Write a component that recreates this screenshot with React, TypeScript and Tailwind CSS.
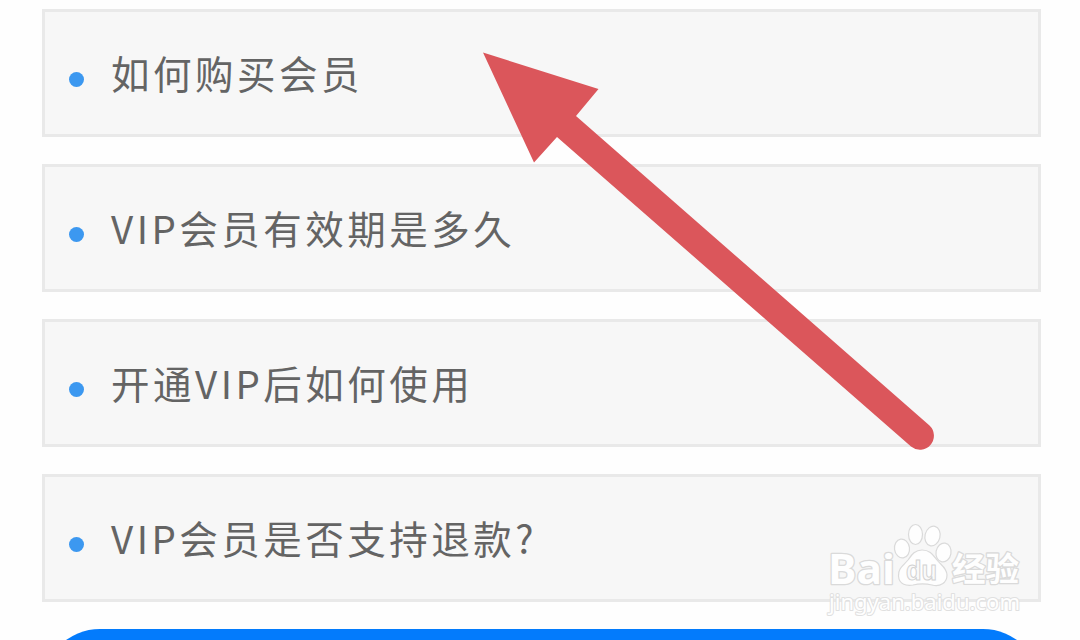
const questions = [
  "如何购买会员",
  "VIP会员有效期是多久",
  "开通VIP后如何使用",
  "VIP会员是否支持退款?",
];

function QuestionCard({ title }: { title: string }) {
  return (
    <li className="flex h-32 shrink-0 items-center border-3 border-[#e9e9e9] bg-[#f7f7f7] pl-6">
      <span className="mt-3 size-[15px] shrink-0 rounded-full bg-[#3c98f0]" />
      <span className="ml-[27px] pb-[3px] text-[38.5px] leading-[58px] tracking-[3.5px] whitespace-nowrap text-[#646464]">
        {title}
      </span>
    </li>
  );
}

function PointerArrow() {
  return (
    <svg
      className="pointer-events-none absolute top-0 left-0"
      width="1080"
      height="640"
      viewBox="0 0 1080 640"
      aria-hidden="true"
    >
      <path
        d="M483 52.500L598.500 89L576 116L929.500 425.500A14 14 0 0 1 911 446.500L557 137L534 162.500Z"
        fill="#db565b"
      />
    </svg>
  );
}

function Watermark() {
  return (
    <svg
      className="pointer-events-none absolute top-[510px] left-[820px]"
      width="240"
      height="120"
      viewBox="0 0 240 120"
      fill="#fefefe"
      stroke="#dadada"
      strokeWidth="1.2"
      aria-label="Baidu"
    >
      <g paintOrder="stroke" strokeLinejoin="round">
        <text
          x="8"
          y="73.500"
          fontSize="42"
          fontFamily="'Open Sans', sans-serif"
          fontWeight="700"
          strokeWidth="2.600"
          textLength="67"
          lengthAdjust="spacingAndGlyphs"
        >
          Bai
        </text>
        <text
          x="132"
          y="71"
          fontSize="33"
          fontFamily="'Noto Sans CJK SC', sans-serif"
          fontWeight="700"
          strokeWidth="2.600"
          textLength="67"
          lengthAdjust="spacingAndGlyphs"
        >
          经验
        </text>
        <text
          x="9"
          y="100"
          fontSize="22"
          fontFamily="'Noto Sans', sans-serif"
          fontWeight="400"
          stroke="#e0e0e0"
          strokeWidth="2"
          textLength="191"
          lengthAdjust="spacingAndGlyphs"
        >
          jingyan.baidu.com
        </text>
      </g>
      <ellipse cx="82" cy="38.500" rx="7.500" ry="9.500" transform="rotate(-8 82 38.500)" />
      <ellipse cx="95.500" cy="24.500" rx="7" ry="10" />
      <ellipse cx="112.500" cy="26" rx="7.500" ry="10" transform="rotate(14 112.500 26)" />
      <ellipse cx="123.500" cy="42.500" rx="7.500" ry="9.500" transform="rotate(10 123.500 42.500)" />
      <path d="M102 40C94 40 91 46 88 50C84 55 78 58 78.500 66C79 75 87 76 93 75C99 73.500 106 73.500 112 75C120 77 127 73 127 65C127 58 121 55 117 50C113 45 110 40 102 40Z" />
      <text
        x="86"
        y="69.500"
        fontSize="27"
        fontFamily="'Liberation Sans', Arial, sans-serif"
        fontWeight="700"
        fill="#fafafa"
        stroke="#d2d2d2"
        strokeWidth="1"
        textLength="31"
        lengthAdjust="spacingAndGlyphs"
      >
        du
      </text>
    </svg>
  );
}

export default function App() {
  return (
    <main className="relative flex h-[640px] w-[1080px] flex-col overflow-hidden bg-[#fefefe] pt-[9px] pr-[39px] pl-[42px] font-['Noto_Sans_CJK_SC',sans-serif]">
      <ul className="flex shrink-0 flex-col gap-[27px]">
        {questions.map((title) => (
          <QuestionCard key={title} title={title} />
        ))}
      </ul>
      <button
        type="button"
        aria-label="VIP"
        className="mt-[27px] h-[116px] w-full shrink-0 rounded-full bg-[#037bfc]"
      />
      <PointerArrow />
      <Watermark />
    </main>
  );
}
